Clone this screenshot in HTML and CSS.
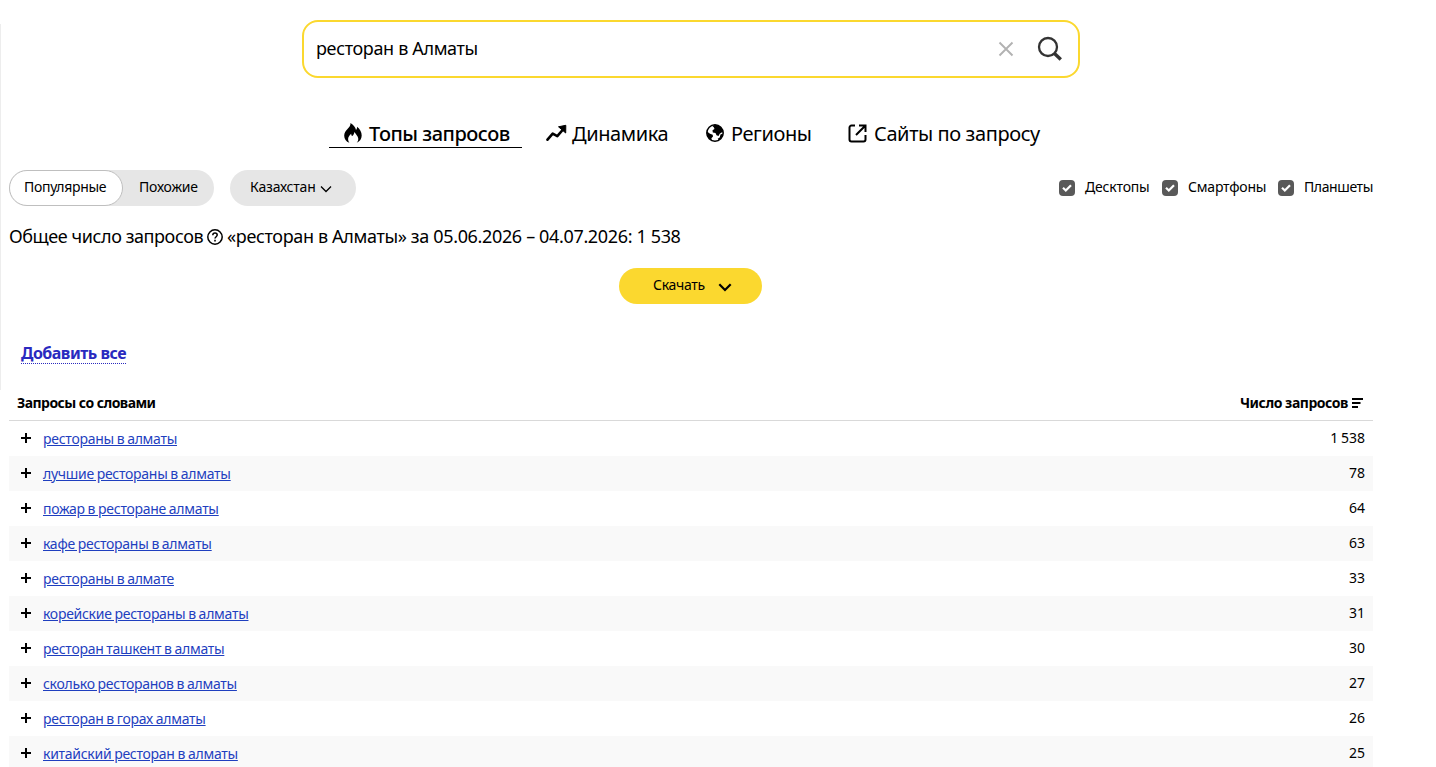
FILE: index.html
```html
<!DOCTYPE html>
<html lang="ru">

<head>
<meta charset="UTF-8">
<meta name="viewport" content="width=device-width, initial-scale=1.0">
<title>Вордстат</title>
<link rel="stylesheet" href="styles.css">
</head>

<body>

<div class="side-line"></div>

<div class="container">
    <form class="search">
        <span class="search-text">ресторан в Алматы</span>
        <svg class="search-clear" width="16" height="16" viewBox="0 0 16 16"><path d="M1.5 1.5l13 13M14.5 1.5l-13 13" stroke="#b2b2b2" stroke-width="1.9" fill="none"/></svg>
        <svg class="search-icon" width="26" height="26" viewBox="0 0 26 26" fill="none" stroke="#333"><circle cx="11" cy="11" r="9" stroke-width="2.3"/><path d="M17.5 17.5l6.3 6" stroke-width="3.4"/></svg>
    </form>

    <nav class="tabs">
        <a class="tab tab-active">
            <svg width="18" height="20" viewBox="0 0 18 20"><path d="M6.500 0c3 2 5 4.200 5.500 7 .9-.8 1.200-1.900 1-3.200 3 2.200 4.700 5.400 4.700 8.700 0 3.300-1.900 6-5 7.300 1.200-1.300 1.800-2.800 1.500-4.500-.3-2.100-1.900-3.500-3.900-6.300-.1 1.900-.8 3-2 4.100-.9-.6-1.100-1.400-1.100-2.400-1.900 1.700-3.200 3.500-3.100 5.700.1 1.300.5 2.400 1.300 3.400C2.100 18.700.2 16 .2 12.800.2 10 1.600 8 3.500 6 5.500 4 6.600 2.500 6.500 0z"/></svg>
            <span class="tab-text">Топы запросов</span>
        </a>
        <a class="tab tab-dynamics">
            <svg width="22" height="18" viewBox="0 0 22 18"><path d="M1.500 15.700l5.200-6 4.600 2.500 5.300-6.200" fill="none" stroke="#000" stroke-width="2.600" stroke-linecap="round" stroke-linejoin="round"/><path d="M12.500 2.800L19.800 1.300l-.1 7.700z" stroke="#000" stroke-width="1" stroke-linejoin="round"/></svg>
            <span class="tab-text">Динамика</span>
        </a>
        <a class="tab tab-regions">
            <svg width="18" height="18" viewBox="0 0 18 18"><circle cx="9" cy="9" r="8.200" fill="#fff" stroke="#000" stroke-width="1.500"/><path d="M9 .8c4 0 7.500 3 8.200 7.400l-1.700.3-1.800 1.200-1.200 2.200-2-.6-1-2.300-2.700-.5-.3-2.200 2-1.200-.7-1.800L6.300 2zM1 7.500l3 2.200 2.700 1.100.3 1.700-1.600 1.700.4 2.200C2.900 15.300.8 12 1 7.500zM14.500 10.500l2.500-1c0 3-1.700 5.500-4.300 6.800l-1-1.500 2-1.300z"/></svg>
            <span class="tab-text">Регионы</span>
        </a>
        <a class="tab tab-sites">
            <svg width="19" height="19" viewBox="0 0 19 19" fill="none" stroke="#000" stroke-width="2"><path d="M7 1.500H3.500a2 2 0 0 0-2 2v12a2 2 0 0 0 2 2h12a2 2 0 0 0 2-2V11M11 1.500h6.500V8M17.200 1.800L8 11"/></svg>
            <span class="tab-text">Сайты по запросу</span>
        </a>
    </nav>

    <div class="filters">
        <div class="switch">
            <button class="switch-item switch-popular">Популярные</button>
            <button class="switch-item switch-similar">Похожие</button>
        </div>
        <button class="region">
            <span>Казахстан</span>
            <svg width="12" height="8" viewBox="0 0 12 8"><path d="M1 1.500l5 5 5-5" fill="none" stroke="#000" stroke-width="1.300"/></svg>
        </button>
        <div class="devices">
            <label class="device device-desktop"><span class="check"><svg width="12" height="10" viewBox="0 0 12 10"><path d="M2 4.800l2.800 2.700L10 2.200" fill="none" stroke="#fff" stroke-width="2.200"/></svg></span><span>Десктопы</span></label>
            <label class="device device-phone"><span class="check"><svg width="12" height="10" viewBox="0 0 12 10"><path d="M2 4.800l2.800 2.700L10 2.200" fill="none" stroke="#fff" stroke-width="2.200"/></svg></span><span>Смартфоны</span></label>
            <label class="device device-tablet"><span class="check"><svg width="12" height="10" viewBox="0 0 12 10"><path d="M2 4.800l2.800 2.700L10 2.200" fill="none" stroke="#fff" stroke-width="2.200"/></svg></span><span>Планшеты</span></label>
        </div>
    </div>

    <div class="total">
        <span class="total-label">Общее число запросов</span>
        <svg width="16" height="16" viewBox="0 0 16 16" fill="none" stroke="#000"><circle cx="8" cy="8" r="7.200" stroke-width="1.500"/><path d="M5.800 6.300c0-1.300.9-2.200 2.200-2.200s2.200.8 2.200 2c0 1.600-2.200 1.700-2.200 3.500" stroke-width="1.500"/><path d="M8 10.700v1.700" stroke-width="1.600"/></svg>
        <span class="total-value">«ресторан в Алматы» за 05.06.2026 – 04.07.2026: 1 538</span>
    </div>

    <button class="download">
        <span>Скачать</span>
        <svg width="14" height="9" viewBox="0 0 14 9"><path d="M1.300 1.300L7 7l5.700-5.700" fill="none" stroke="#000" stroke-width="2.200"/></svg>
    </button>

    <div class="add-row"><a class="add-all">Добавить все</a></div>

    <table class="table">
        <thead>
            <tr>
                <th>Запросы со словами</th>
                <th class="count"><span class="count-label">Число запросов</span><svg class="sort" width="11" height="10" viewBox="0 0 11 10"><path d="M0 1h11M0 5h8.500M0 9h6" stroke="#000" stroke-width="1.800"/></svg></th>
            </tr>
        </thead>
        <tbody>
            <tr><td><span class="plus"></span><a class="query">рестораны в алматы</a></td><td class="count">1 538</td></tr>
            <tr><td><span class="plus"></span><a class="query">лучшие рестораны в алматы</a></td><td class="count">78</td></tr>
            <tr><td><span class="plus"></span><a class="query">пожар в ресторане алматы</a></td><td class="count">64</td></tr>
            <tr><td><span class="plus"></span><a class="query">кафе рестораны в алматы</a></td><td class="count">63</td></tr>
            <tr><td><span class="plus"></span><a class="query">рестораны в алмате</a></td><td class="count">33</td></tr>
            <tr><td><span class="plus"></span><a class="query">корейские рестораны в алматы</a></td><td class="count">31</td></tr>
            <tr><td><span class="plus"></span><a class="query">ресторан ташкент в алматы</a></td><td class="count">30</td></tr>
            <tr><td><span class="plus"></span><a class="query">сколько ресторанов в алматы</a></td><td class="count">27</td></tr>
            <tr><td><span class="plus"></span><a class="query">ресторан в горах алматы</a></td><td class="count">26</td></tr>
            <tr><td><span class="plus"></span><a class="query">китайский ресторан в алматы</a></td><td class="count">25</td></tr>
        </tbody>
    </table>
</div>

</body>

</html>
```
FILE: styles.css
```css
* {
    box-sizing: border-box;
}

body {
    font-family: "Noto Sans", sans-serif;
    font-size: 14px;
    color: #000;
    background-color: #fff;
    margin: 0;
    height: 767px;
    overflow: hidden;
}

svg {
    flex: none;
}

button {
    font: inherit;
    color: inherit;
    border: none;
    padding: 0;
}

.side-line {
    position: absolute;
    left: 0;
    top: 24px;
    width: 1px;
    height: 366px;
    background-color: #ededed;
}

.container {
    width: 1364px;
    margin-left: 9px;
    padding-top: 20px;
    white-space: nowrap;
}

.search {
    display: flex;
    align-items: center;
    width: 778px;
    height: 58px;
    margin-left: 293px;
    padding: 0 15px 0 12px;
    border: 2px solid #fbd82f;
    border-radius: 16px;
}

.search-text {
    flex: 1;
    padding-bottom: 2px;
    font-size: 18px;
    line-height: 24px;
    letter-spacing: -0.35px;
}

.search-icon {
    margin-left: 23px;
}

.tabs {
    display: flex;
    height: 30px;
    margin: 40px 0 0 320px;
    font-size: 20px;
    line-height: 30px;
    letter-spacing: -0.4px;
}

.tab {
    display: flex;
    align-items: center;
    gap: 7px;
    height: 30px;
}

.tab-text {
    padding-top: 2px;
    line-height: 28px;
}

.tab-active {
    width: 193px;
    padding-left: 15px;
    border-bottom: 1px solid #000;
    font-weight: 500;
    letter-spacing: -0.5px;
}

.tab-dynamics {
    width: 160px;
    margin-left: 24px;
    gap: 4px;
}

.tab-regions {
    width: 142px;
    gap: 7px;
}

.tab-sites {
    gap: 7px;
}

.filters {
    display: flex;
    align-items: center;
    height: 36px;
    margin-top: 22px;
    line-height: 34px;
}

.switch {
    display: flex;
    width: 205px;
    border-radius: 18px;
    background-color: #e6e6e6;
}

.switch-item {
    height: 36px;
    padding-bottom: 2px;
    text-align: left;
    background: none;
    letter-spacing: -0.2px;
}

.switch-popular {
    width: 114px;
    padding: 0 0 2px 14px;
    border: 1px solid #bfbfbf;
    border-radius: 18px;
    background-color: #fff;
    line-height: 32px;
    letter-spacing: -0.3px;
}

.switch-similar {
    padding-left: 16px;
}

.region {
    display: flex;
    align-items: center;
    gap: 4px;
    width: 126px;
    height: 36px;
    margin-left: 16px;
    padding: 0 0 2px 20px;
    border-radius: 18px;
    background-color: #e6e6e6;
    letter-spacing: -0.2px;
}

.region svg {
    margin-top: 4px;
}

.devices {
    display: flex;
    margin-left: auto;
    letter-spacing: -0.2px;
}

.device {
    display: flex;
    align-items: center;
    gap: 10px;
    height: 34px;
    margin-bottom: 2px;
}

.device-desktop {
    width: 103px;
}

.device-phone {
    width: 116px;
}

.device-tablet {
    width: 95px;
    letter-spacing: -0.4px;
}

.check {
    display: flex;
    flex: none;
    align-items: center;
    justify-content: center;
    width: 16px;
    height: 16px;
    margin-top: 2px;
    border-radius: 4px;
    background-color: #595959;
}

.total {
    display: flex;
    align-items: center;
    height: 24px;
    margin-top: 19px;
    font-size: 18px;
    line-height: 22px;
    letter-spacing: -0.35px;
}

.total-label {
    width: 198px;
    padding-bottom: 2px;
    letter-spacing: -0.42px;
}

.total-value {
    margin-left: 4px;
    padding-bottom: 2px;
}

.download {
    display: flex;
    align-items: center;
    gap: 13px;
    width: 143px;
    height: 36px;
    margin: 19px 0 0 610px;
    padding: 0 0 3px 34px;
    border-radius: 18px;
    background-color: #fbd82f;
    letter-spacing: -0.3px;
}

.download svg {
    margin-top: 5px;
}

.add-row {
    height: 20px;
    margin-top: 40px;
    padding-left: 12px;
}

.add-all {
    display: inline-block;
    height: 20px;
    border-bottom: 1px dotted #2a2abf;
    color: #2a2abf;
    font-size: 16px;
    font-weight: 700;
    line-height: 18px;
    letter-spacing: -0.5px;
}

.table {
    width: 100%;
    margin-top: 21px;
    border-collapse: separate;
    border-spacing: 0;
}

.table th {
    height: 36px;
    padding: 0 8px;
    border-bottom: 1px solid #d9d9d9;
    text-align: left;
    font-weight: 700;
    letter-spacing: -0.55px;
}

.table td {
    height: 35px;
    padding: 0 8px;
    line-height: 20px;
}

.table .count {
    text-align: right;
}

.table td.count {
    padding-bottom: 2px;
    word-spacing: -1px;
}

.table th.count {
    padding-right: 10px;
    letter-spacing: -0.45px;
}

.sort {
    margin-left: 4px;
}

.table tbody tr:nth-of-type(even) {
    background-color: #f9f9f9;
}

.plus {
    display: inline-block;
    position: relative;
    top: -1px;
    width: 10px;
    height: 10px;
    margin: 0 12px 0 4px;
    background: linear-gradient(#000, #000) center / 10px 2px no-repeat, linear-gradient(#000, #000) center / 2px 10px no-repeat;
}

.query {
    color: #1f3fbf;
    text-decoration: underline;
    letter-spacing: -0.28px;
    word-spacing: -0.5px;
}
```
